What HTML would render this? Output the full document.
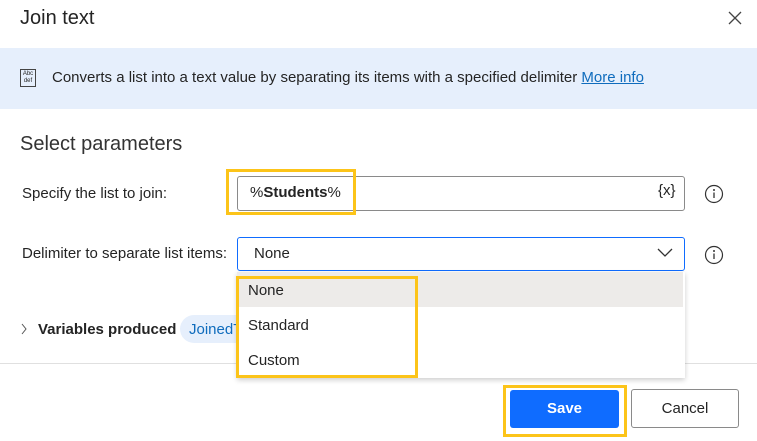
<!DOCTYPE html>
<html><head><style>
body{margin:0;width:757px;height:441px;background:#fff;font-family:"Liberation Sans",sans-serif;color:#242424;position:relative;overflow:hidden}
.a{position:absolute}
</style></head><body>
<div class="a" style="left:20px;top:7px;font-size:20px;">Join text</div>
<svg class="a" style="left:728px;top:11px" width="14" height="14"><path d="M1 1L13 13M13 1L1 13" stroke="#444" stroke-width="1.3"/></svg>
<div class="a" style="left:0;top:48px;width:757px;height:61px;background:#e6effc"></div>
<div class="a" style="left:20px;top:69px;width:16px;height:18px;border:1px solid #444;box-sizing:border-box;font-size:6px;line-height:7px;text-align:center;padding-top:1px">Abc<br>def</div>
<div class="a" style="left:52px;top:69px;font-size:15px;">Converts a list into a text value by separating its items with a specified delimiter <span style="color:#0f6cbd;text-decoration:underline">More info</span></div>
<div class="a" style="left:20px;top:133px;font-size:20px;color:#333">Select parameters</div>
<div class="a" style="left:22px;top:185px;font-size:15px;">Specify the list to join:</div>
<div class="a" style="left:237px;top:176px;width:448px;height:35px;border:1px solid #8a8a8a;border-radius:3px;box-sizing:border-box"></div>
<div class="a" style="left:226px;top:169px;width:130px;height:46px;border:3px solid #fcc419;box-sizing:border-box"></div>
<div class="a" style="left:250px;top:184px;font-size:15px;">%<b>Students</b>%</div>
<div class="a" style="left:658px;top:182px;font-size:15px;">{x}</div>
<svg class="a" style="left:704px;top:184px" width="20" height="20"><circle cx="10" cy="10" r="8.5" fill="none" stroke="#333" stroke-width="1.2"/><path d="M10 8.5V14" stroke="#333" stroke-width="1.3"/><circle cx="10" cy="6" r="1" fill="#333"/></svg>
<div class="a" style="left:22px;top:245px;font-size:15px;">Delimiter to separate list items:</div>
<div class="a" style="left:237px;top:237px;width:448px;height:34px;border:1px solid #0f6cff;border-radius:3px;box-sizing:border-box"></div>
<div class="a" style="left:254px;top:245px;font-size:15px;">None</div>
<svg class="a" style="left:657px;top:248px" width="16" height="10"><path d="M1 1L8 8L15 1" fill="none" stroke="#333" stroke-width="1.3"/></svg>
<svg class="a" style="left:704px;top:245px" width="20" height="20"><circle cx="10" cy="10" r="8.5" fill="none" stroke="#333" stroke-width="1.2"/><path d="M10 8.5V14" stroke="#333" stroke-width="1.3"/><circle cx="10" cy="6" r="1" fill="#333"/></svg>
<svg class="a" style="left:20px;top:323px" width="8" height="12"><path d="M2 1L6 6L2 11" fill="none" stroke="#555" stroke-width="1"/></svg>
<div class="a" style="left:38px;top:321px;font-size:15px;font-weight:bold">Variables produced</div>
<div class="a" style="left:180px;top:315px;width:80px;height:28px;background:#e6effc;border-radius:14px"></div>
<div class="a" style="left:189px;top:321px;font-size:15px;color:#0f6cbd">JoinedText</div>
<div class="a" style="left:0;top:363px;width:757px;height:1px;background:#e0e0e0"></div>
<div class="a" style="left:237px;top:272px;width:448px;height:106px;background:#fff;box-shadow:0 2px 5px rgba(0,0,0,.2)"></div>
<div class="a" style="left:237px;top:272px;width:446px;height:35px;background:#edebe9"></div>
<div class="a" style="left:248px;top:282px;font-size:15px;">None</div>
<div class="a" style="left:248px;top:317px;font-size:15px;">Standard</div>
<div class="a" style="left:248px;top:352px;font-size:15px;">Custom</div>
<div class="a" style="left:236px;top:276px;width:182px;height:102px;border:3px solid #fcc419;box-sizing:border-box"></div>
<div class="a" style="left:503px;top:385px;width:124px;height:52px;border:3px solid #fcc419;box-sizing:border-box"></div>
<div class="a" style="left:510px;top:390px;width:109px;height:38px;background:#0f6cff;border-radius:3px;color:#fff;font-weight:bold;font-size:15px;text-align:center;line-height:38px">Save</div>
<div class="a" style="left:631px;top:389px;width:108px;height:39px;border:1px solid #8a8a8a;border-radius:3px;box-sizing:border-box;font-size:15px;text-align:center;line-height:37px">Cancel</div>
</body></html>
